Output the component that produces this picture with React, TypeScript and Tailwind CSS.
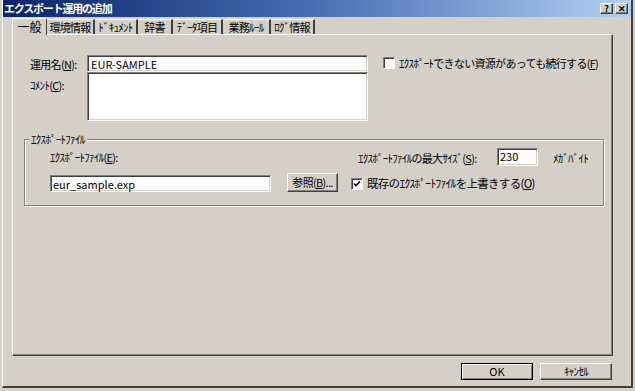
import React from 'react';

const tabs = [
  { label: '一般', w: 'w-[35px]', active: true },
  { label: '環境情報', w: 'w-[48px]' },
  { label: 'ﾄﾞｷｭﾒﾝﾄ', w: 'w-[43px]' },
  { label: '辞書', w: 'w-[35px]' },
  { label: 'ﾃﾞｰﾀ項目', w: 'w-[50px]' },
  { label: '業務ﾙｰﾙ', w: 'w-[48px]' },
  { label: 'ﾛｸﾞ情報', w: 'w-[44px]' },
];

function Key({ k }: { k: string }) {
  return (
    <>
      (<span className="underline">{k}</span>)
    </>
  );
}

function Sunken({ className, children }: { className: string; children?: React.ReactNode }) {
  return (
    <div
      className={`bg-white tracking-normal border border-t-[#808080] border-l-[#808080] border-r-white border-b-white shadow-[inset_1px_1px_0_#404040,inset_-1px_-1px_0_#d4d0c8] ${className}`}
    >
      {children}
    </div>
  );
}

function Check({ checked }: { checked?: boolean }) {
  return (
    <div className="w-[12px] h-[12px] shrink-0 bg-white border border-t-[#808080] border-l-[#808080] border-r-white border-b-white shadow-[inset_1px_1px_0_#404040] flex items-center justify-center">
      {checked && (
        <svg width="8" height="8" viewBox="0 0 8 8">
          <path d="M1 3.5 L3 5.5 L7 1.5" stroke="#000" strokeWidth="1.6" fill="none" />
        </svg>
      )}
    </div>
  );
}

function Button({ className, children, def }: { className: string; children: React.ReactNode; def?: boolean }) {
  return (
    <div
      className={`flex items-center justify-center whitespace-nowrap bg-[#d4d0c8] border ${
        def
          ? 'border-black shadow-[inset_1px_1px_0_#fff,inset_-1px_-1px_0_#808080]'
          : 'border-t-white border-l-white border-r-[#404040] border-b-[#404040] shadow-[inset_-1px_-1px_0_#808080]'
      } ${className}`}
    >
      {children}
    </div>
  );
}

export default function App() {
  return (
    <div className="w-[635px] h-[391px] bg-[#d4d0c8] overflow-hidden font-['Noto_Sans_CJK_JP','Noto_Sans_CJK_SC',sans-serif] text-[11px] tracking-[-0.7px] leading-none text-black whitespace-nowrap">
      <div className="h-[388px] flex flex-col border-l border-l-white border-r-2 border-r-[#404040] border-b-2 border-b-[#404040] ml-[2px] w-[631px]">
        {/* title bar */}
        <div className="h-[17px] flex items-center justify-between pl-[1px] pr-[3px] bg-gradient-to-r from-[#0a246a] via-[#4a6fb5] to-[#b4d0f2]">
          <span className="text-white font-bold text-[11px] tracking-[-1.2px]">エクスポート運用の追加</span>
          <div className="flex gap-[2px]">
            <Button className="w-[13px] h-[11px] text-[9px] font-bold tracking-normal">?</Button>
            <Button className="w-[13px] h-[11px] text-[9px] font-bold tracking-normal">✕</Button>
          </div>
        </div>

        {/* tabs */}
        <div className="h-[17px] pl-[9px] flex items-end">
          {tabs.map((t) =>
            t.active ? (
              <div
                key={t.label}
                className={`${t.w} h-[17px] -mb-px z-10 bg-[#d4d0c8] border-t border-l border-t-white border-l-white border-r border-r-[#404040] rounded-t-[2px] flex items-center justify-center text-[12px] tracking-normal`}
              >
                {t.label}
              </div>
            ) : (
              <div
                key={t.label}
                className={`${t.w} h-[15px] border-t border-t-white border-r-2 border-r-[#404040] flex items-center justify-center`}
              >
                {t.label}
              </div>
            )
          )}
        </div>

        {/* panel */}
        <div className="ml-[9px] w-[601px] h-[322px] border border-t-white border-l-white border-r-[#404040] border-b-[#404040] shadow-[inset_-1px_-1px_0_#808080]">
          <div className="flex pt-[20px] pl-[17px]">
            <div className="grid grid-cols-[57px_281px]">
              <div className="pt-[4px]">
                運用名<Key k="N" />:
              </div>
              <Sunken className="h-[17px] pl-[3px] pt-[3px]">EUR-SAMPLE</Sunken>
              <div className="pt-[8px]">
                ｺﾒﾝﾄ<Key k="C" />:
              </div>
              <Sunken className="h-[49px]" />
            </div>
            <div className="flex items-center gap-[4px] ml-[15px] mt-[2px] h-[12px]">
              <Check />
              <span>
                ｴｸｽﾎﾟｰﾄできない資源があっても続行する<Key k="F" />
              </span>
            </div>
          </div>

          {/* group box */}
          <div className="relative mt-[18px] ml-[11px] w-[580px] h-[67px] border border-[#808080] shadow-[1px_1px_0_#fff,inset_1px_1px_0_#fff]">
            <span className="absolute -top-[6px] left-[4px] px-[2px] bg-[#d4d0c8]">ｴｸｽﾎﾟｰﾄﾌｧｲﾙ</span>
            <div className="pl-[25px] pt-[8px]">
              <div className="flex items-center h-[18px]">
                <div className="w-[308px]">
                  ｴｸｽﾎﾟｰﾄﾌｧｲﾙ<Key k="E" />:
                </div>
                <div className="w-[139px] pt-[2px]">
                  ｴｸｽﾎﾟｰﾄﾌｧｲﾙの最大ｻｲｽﾞ<Key k="S" />:
                </div>
                <Sunken className="w-[41px] h-[18px] pl-[2px] pt-[2px]">230</Sunken>
                <span className="ml-[15px] pt-[2px]">ﾒｶﾞﾊﾞｲﾄ</span>
              </div>
              <div className="flex items-center mt-[7px] h-[19px]">
                <Sunken className="w-[221px] h-[17px] pl-[2px] pt-[3px] mt-[2px]">eur_sample.exp</Sunken>
                <Button className="ml-[16px] w-[51px] h-[19px]">
                  参照<Key k="B" />...
                </Button>
                <div className="ml-[13px] mt-[3px] flex items-center gap-[4px]">
                  <Check checked />
                  <span className="text-[11.5px]">
                    既存のｴｸｽﾎﾟｰﾄﾌｧｲﾙを上書きする<Key k="O" />
                  </span>
                </div>
              </div>
            </div>
          </div>
        </div>

        {/* bottom buttons */}
        <div className="flex justify-end gap-[7px] mt-[7px] pr-[19px]">
          <Button def className="w-[72px] h-[17px] tracking-normal">
            OK
          </Button>
          <Button className="w-[72px] h-[17px]">ｷｬﾝｾﾙ</Button>
        </div>
      </div>
    </div>
  );
}
